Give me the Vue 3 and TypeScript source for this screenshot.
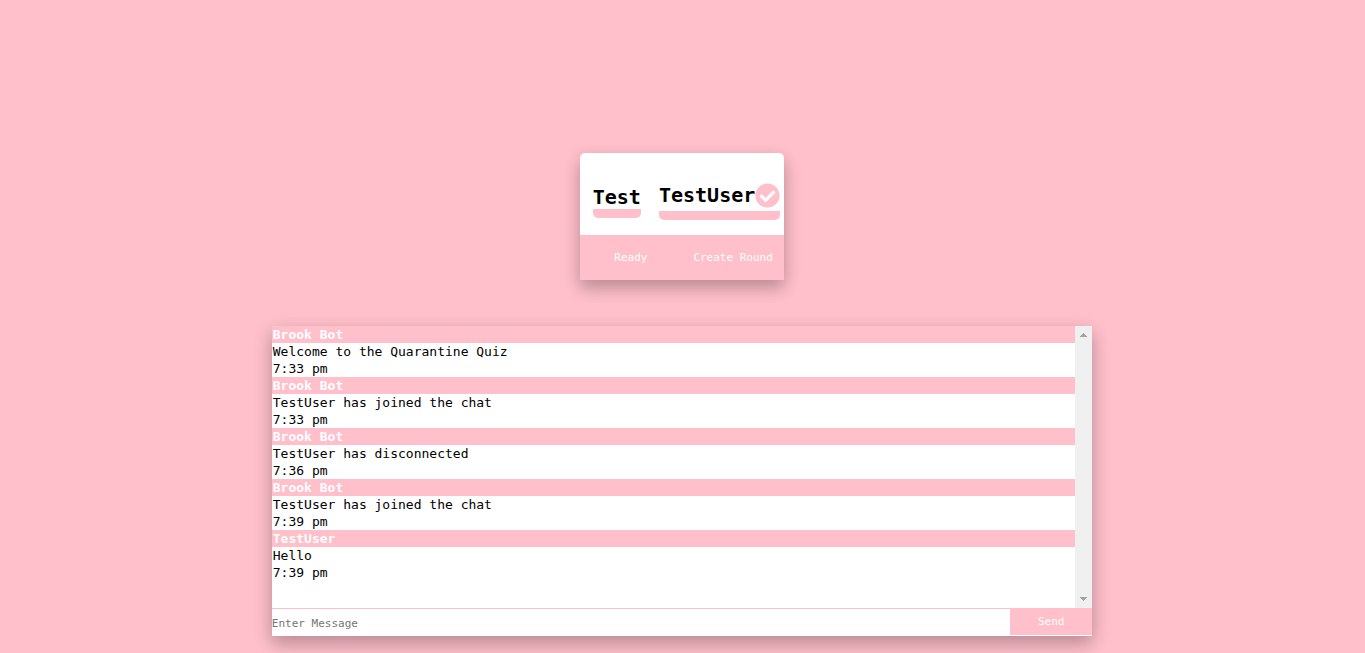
<script setup lang="ts">
import { ref } from 'vue'

interface Player {
  name: string
  ready: boolean
}

interface Message {
  user: string
  text: string
  time: string
}

const players = ref<Player[]>([
  { name: 'Test', ready: false },
  { name: 'TestUser', ready: true },
])

const messages = ref<Message[]>([
  { user: 'Brook Bot', text: 'Welcome to the Quarantine Quiz', time: '7:33 pm' },
  { user: 'Brook Bot', text: 'TestUser has joined the chat', time: '7:33 pm' },
  { user: 'Brook Bot', text: 'TestUser has disconnected', time: '7:36 pm' },
  { user: 'Brook Bot', text: 'TestUser has joined the chat', time: '7:39 pm' },
  { user: 'TestUser', text: 'Hello', time: '7:39 pm' },
])

const draft = ref('')
const list = ref<HTMLElement | null>(null)

function scroll(step: number) {
  list.value?.scrollBy({ top: step })
}

function send() {
  const text = draft.value.trim()
  if (!text) return
  const now = new Date()
  const hours = now.getHours()
  const minutes = String(now.getMinutes()).padStart(2, '0')
  const time = `${hours % 12 || 12}:${minutes} ${hours < 12 ? 'am' : 'pm'}`
  messages.value.push({ user: 'TestUser', text, time })
  draft.value = ''
}
</script>

<template>
  <main class="page">
    <section class="lobby">
      <div class="players">
        <div v-for="player in players" :key="player.name" class="player">
          <div class="player-name">
            <span>{{ player.name }}</span>
            <svg v-if="player.ready" class="tick" viewBox="0 0 512 512" role="img" aria-label="Ready">
              <path
                fill="currentColor"
                d="M504 256c0 136.967-111.033 248-248 248S8 392.967 8 256 119.033 8 256 8s248 111.033 248 248zM227.314 387.314l184-184c6.248-6.248 6.248-16.379 0-22.627l-22.627-22.627c-6.248-6.249-16.379-6.249-22.628 0L216 308.118l-70.059-70.059c-6.248-6.248-16.379-6.248-22.628 0l-22.627 22.627c-6.248 6.248-6.248 16.379 0 22.627l104 104c6.249 6.249 16.379 6.249 22.628.001z"
              />
            </svg>
          </div>
          <div class="underline"></div>
        </div>
      </div>
      <div class="actions">
        <button type="button">Ready</button>
        <button type="button">Create Round</button>
      </div>
    </section>

    <section class="chat">
      <div class="history">
        <div ref="list" class="messages">
          <article v-for="(message, index) in messages" :key="index">
            <h2>{{ message.user }}</h2>
            <p>{{ message.text }}</p>
            <p>{{ message.time }}</p>
          </article>
        </div>
        <div class="scrollbar">
          <button type="button" aria-label="Scroll up" @click="scroll(-40)">
            <svg viewBox="0 0 7 4" shape-rendering="crispEdges"><path fill="#a3a3a3" d="M3 0h1v1h1v1h1v1h1v1H0V3h1V2h1V1h1z" /></svg>
          </button>
          <button type="button" aria-label="Scroll down" @click="scroll(40)">
            <svg viewBox="0 0 7 4" shape-rendering="crispEdges"><path fill="#a3a3a3" d="M0 0h7v1H6v1H5v1H4v1H3V3H2V2H1V1H0z" /></svg>
          </button>
        </div>
      </div>
      <form class="composer" @submit.prevent="send">
        <input v-model="draft" type="text" placeholder="Enter Message" aria-label="Enter Message" />
        <button type="submit">Send</button>
      </form>
    </section>
  </main>
</template>

<style>
body {
  background: pink;
}
</style>

<style scoped>
.page {
  display: flex;
  flex-direction: column;
  align-items: center;
  gap: 46px;
  box-sizing: border-box;
  min-height: 100vh;
  padding: 153px 1px 17px 0;
  background: pink;
  color: #000;
  font-family: Consolas, "DejaVu Sans Mono", monospace;
  font-size: 13px;
  line-height: 17px;
}

button,
input {
  margin: 0;
  border: 0;
  border-radius: 0;
  font-family: inherit;
  font-size: 11px;
}

button {
  padding: 0;
  background: pink;
  color: #fff;
  cursor: pointer;
}

.lobby,
.chat {
  background: #fff;
  box-shadow: 0 8px 16px 0 rgba(0, 0, 0, 0.2), 0 6px 20px 0 rgba(0, 0, 0, 0.1);
}

.lobby {
  min-width: 204px;
  border-radius: 5px 5px 0 0;
}

.players {
  display: flex;
  align-items: center;
  gap: 18px;
  padding: 30px 4px 15px 13px;
}

.player-name {
  display: flex;
  font-size: 20px;
  font-weight: bold;
  line-height: 24px;
}

.tick {
  width: 25px;
  height: 25px;
  color: pink;
}

.underline {
  height: 9px;
  margin-top: 3px;
  border-radius: 0 0 5px 5px;
  background: pink;
}

.player:first-child .underline {
  margin-top: 0;
}

.actions {
  display: grid;
  grid-template-columns: 1fr 1fr;
}

.actions button {
  height: 45px;
}

.chat {
  width: calc(60% + 2px);
}

.history {
  display: flex;
  height: 282px;
}

.messages {
  flex: 1;
  overflow-y: auto;
  scrollbar-width: none;
}

.messages h2,
.messages p {
  margin: 0;
  padding-left: 1px;
  font-size: 13px;
}

.messages h2 {
  background: pink;
  color: #fff;
}

.scrollbar {
  display: flex;
  flex-direction: column;
  justify-content: space-between;
  width: 17px;
  background: #f0f0f0;
}

.scrollbar button {
  display: grid;
  place-items: center;
  height: 18px;
  background: transparent;
}

.scrollbar svg {
  width: 7px;
  height: 4px;
}

.composer {
  display: flex;
  align-items: flex-start;
}

.composer input {
  flex: 1;
  box-sizing: border-box;
  min-width: 0;
  height: 28px;
  padding: 1px 0 0;
  border-top: 1px solid pink;
  outline: none;
  background: #fff;
}

.composer input::placeholder {
  color: #757575;
}

.composer button {
  width: 10%;
  height: 27px;
}
</style>
